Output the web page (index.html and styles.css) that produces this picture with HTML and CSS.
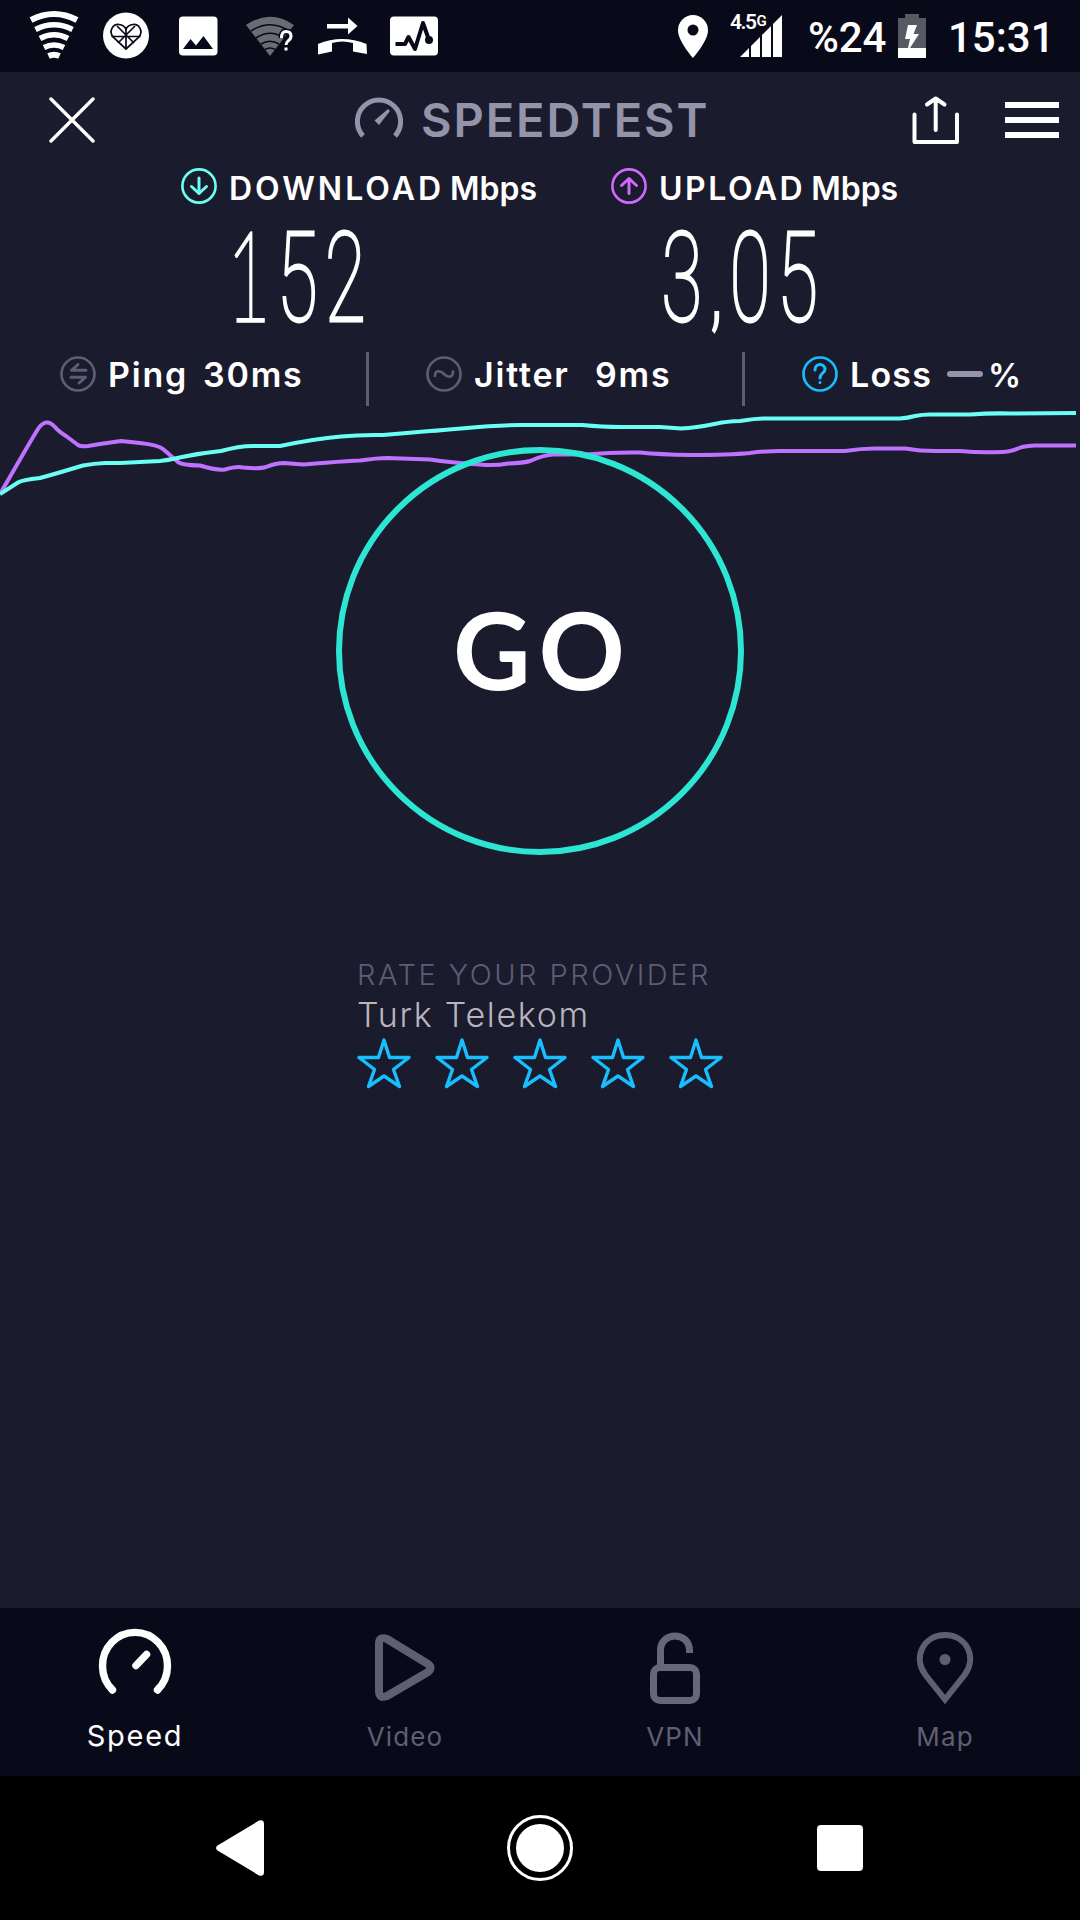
FILE: index.html
```html
<!DOCTYPE html>
<html lang="en">
<head>
<meta charset="utf-8">
<title>Speedtest</title>
<link rel="stylesheet" href="styles.css">
</head>
<body>
<div class="screen">
  <div class="statusbar">
    <svg class="status-icons" width="420" height="72" viewBox="24 0 420 72">
      <g fill="none" stroke="#fff">
        <path d="M31 20Q54 8 77 20" stroke-width="6"/>
        <path d="M35.5 29.500Q54 20 72.500 29.500" stroke-width="5.500"/>
        <path d="M40 38.500Q54 31 68 38.500" stroke-width="5.500"/>
        <path d="M44 47.500Q54 42.500 64 47.500" stroke-width="5.500"/>
        <path d="M48.500 56Q54 53.500 59.500 56" stroke-width="6"/>
      </g>
      <circle cx="126" cy="35.500" r="23" fill="#fff"/>
      <g fill="none" stroke="#090a19" stroke-width="1.700">
        <path d="M126 49L113.500 37.500C108 31 113 24 119 24.500Q124 25 126 29Q128 25 133 24.500C139 24 144 31 138.500 37.500Z"/>
        <path d="M126 27V49M111.500 36.500H140.500M117 26L134 43M135 26L118 43"/>
      </g>
      <rect x="179" y="16.500" width="38.500" height="39" rx="4" fill="#fff"/>
      <path d="M183 49L190.500 39L196 45.500L203.500 36L213 49Z" fill="#090a19"/>
      <path d="M246 25Q270 8.500 294 25L270 56Z" fill="#6b6b75"/>
      <path d="M251 31Q270 18.500 289 31M256 38Q270 28.500 284 38M261 44Q270 38.500 279 44M265 49.500Q270 46.500 275 49.500" fill="none" stroke="#090a19" stroke-width="1.600"/>
      <path d="M281.500 38Q281.500 31.500 286 31.500Q291 31.500 291 36Q291 39 288 41Q286 43 286 45M286 48V50" fill="none" stroke="#090a19" stroke-width="6"/>
      <path d="M281.500 38Q281.500 31.500 286 31.500Q291 31.500 291 36Q291 39 288 41Q286 43 286 45M286 47.500V50.500" fill="none" stroke="#fff" stroke-width="3"/>
      <path d="M327 24H348V17.500L357.500 26L348 34.500V28.500H327Z" fill="#fff"/>
      <path d="M318 44Q342 34 366.500 44L367 54L353 51.500V43Q342 40 332 43V51.500L318 54.500Z" fill="#fff"/>
      <rect x="390" y="16.500" width="48" height="39" rx="4" fill="#fff"/>
      <path d="M395.500 44H405L408.500 37L415 49L423 23L429 40" fill="none" stroke="#090a19" stroke-width="4" stroke-linejoin="round"/>
      <circle cx="429" cy="40" r="4" fill="#090a19"/>
    </svg>
    <div class="status-right">
      <svg width="32" height="44" viewBox="0 0 32 44"><path fill="#fff" fill-rule="evenodd" d="M16 1A15 15.500 0 0 0 1 16.500C1 27 16 44 16 44S31 27 31 16.500A15 15.500 0 0 0 16 1ZM16 10.500A5.500 5.500 0 1 1 16 21.500A5.500 5.500 0 1 1 16 10.500Z"/></svg>
      <div class="signal">
        <span class="net">4.5<small>G</small></span>
        <svg width="42" height="44" viewBox="0 0 42 44" fill="#fff"><path d="M0 43L9 34V43ZM11 32L20 23V43H11ZM22 21L31 12V43H22ZM33 10L42 1V43H33Z"/></svg>
      </div>
      <span class="percent">%24</span>
      <svg class="battery" width="28" height="44" viewBox="0 0 28 44"><path fill="#595963" d="M7 0H21V4H28V34H0V4H7Z"/><path fill="#fff" d="M0 34H10L12 25H7L10 11H19L15.500 20H21L12 34H28V44H0Z"/></svg>
      <span class="clock">15:31</span>
    </div>
  </div>

  <div class="header">
    <svg width="46" height="46" viewBox="0 0 46 46"><path d="M2 2L44 44M44 2L2 44" stroke="#fff" stroke-width="3.400" stroke-linecap="round"/></svg>
    <div class="brand">
      <svg width="48" height="42" viewBox="0 0 48 42"><path d="M8 40A21.600 21.600 0 1 1 40 40" fill="none" stroke="#9393a9" stroke-width="5"/><path d="M19.500 24.500L33 13L35 15L24 29Z" fill="#9393a9"/></svg>
      <span class="brand-name">SPEEDTEST</span>
    </div>
    <div class="actions">
      <svg width="48" height="48" viewBox="0 0 48 48" fill="none" stroke="#fff" stroke-width="4" stroke-linecap="round"><path d="M2.500 18.500V46H45V18.500M23.700 34V3M15 8.500L23.700 2.500L32.500 8.500" stroke-linejoin="round"/></svg>
      <svg width="54" height="36" viewBox="0 0 54 36" fill="#fff"><path d="M0 0H54V6H0ZM0 15H54V21H0ZM0 30H54V36H0Z"/></svg>
    </div>
  </div>

  <div class="results">
    <div class="result down">
      <div class="result-label">
        <svg width="36" height="36" viewBox="0 0 36 36" fill="none" stroke="#6afff3" stroke-linecap="round" stroke-linejoin="round"><circle cx="18" cy="18" r="16.600" stroke-width="2.600"/><path d="M18 10V25.500M10.500 18.500L18 25.500L25.500 18.500" stroke-width="3"/></svg>
        <span><span class="caps">DOWNLOAD</span> Mbps</span>
      </div>
      <svg class="figure" width="150" height="108" viewBox="0 0 150 108"><g transform="scale(.6 1)"><text x="-10 73 153" y="98"><tspan class="one">1</tspan>52</text></g></svg>
    </div>
    <div class="result up">
      <div class="result-label">
        <svg width="36" height="36" viewBox="0 0 36 36" fill="none" stroke="#d168ff" stroke-linecap="round" stroke-linejoin="round"><circle cx="18" cy="18" r="16.600" stroke-width="2.600"/><path d="M18 25.500V10.500M10.500 17.500L18 10.500L25.500 17.500" stroke-width="3"/></svg>
        <span><span class="caps">UPLOAD</span> Mbps</span>
      </div>
      <svg class="figure" width="180" height="108" viewBox="0 0 180 108"><g transform="scale(.6 1)"><text x="-3 80 111 190" y="98">3<tspan class="comma">,</tspan>05</text></g></svg>
    </div>
  </div>

  <div class="metrics">
    <div class="metric ping">
      <svg width="36" height="36" viewBox="0 0 36 36" fill="none" stroke="#5d5d73" stroke-linecap="round" stroke-linejoin="round"><circle cx="18" cy="18" r="16.500" stroke-width="2.600"/><path d="M26 14.300H11.500L18 8.500M11 21.200H25.500L19 27" stroke-width="3"/></svg>
      <span class="name">Ping</span><span class="value">30ms</span>
    </div>
    <div class="metric jitter">
      <svg width="36" height="36" viewBox="0 0 36 36" fill="none" stroke="#5d5d73" stroke-linecap="round"><circle cx="18" cy="18" r="16.500" stroke-width="2.600"/><path d="M9 20C9 14 14 14 18 18S27 22 27 15.500" stroke-width="2.600"/></svg>
      <span class="name">Jitter</span><span class="value">9ms</span>
    </div>
    <div class="metric loss">
      <svg width="36" height="36" viewBox="0 0 36 36" fill="none" stroke="#18bfff" stroke-linecap="round"><circle cx="18" cy="18" r="16.500" stroke-width="2.600"/><path d="M13 14C13 6.500 23 7 23 13.500C23 17 18 17 18 22M18 26.500V26.600" stroke-width="3"/></svg>
      <span class="name">Loss</span><span class="dash"></span><span class="unit">%</span>
    </div>
  </div>

  <svg class="chart" width="1080" height="94" viewBox="0 406 1080 94" fill="none" stroke-width="4" stroke-linejoin="round">
    <path stroke="#bf71ff" d="M0 494C12 474 25 450 38 429Q46 417 55 427Q58 431 66 436L78 445Q81 447 88 446L100 444L121 441L140 443Q158 445 163 449L178 462Q181 465 200 465.500Q216 470.500 225 469.500Q237 466 243 467.500Q260 469 266 467Q276 463 284 463L303 464.500C325 463 343 461 360 460.500Q378 458 387 458L430 459.500Q450 462.500 480 464.500Q495 466 508 463.500Q524 463 530 461Q546 454 555 454.500L586 454.500Q613 452 640 452.500Q660 454.500 690 455Q730 455 750 453Q770 450.500 785 451H845Q861 448.500 875 448.500H905Q923 451.500 940 451H960Q980 453 1002 452Q1010 452 1022 447Q1030 445 1038 445.500H1076"/>
    <path stroke="#6afff3" d="M0 494L18 482.500Q22 480 40 478Q55 474 83 465.500Q94 463.500 105 463H120L160 461Q170 460 182 457Q201 453 221 451Q240 445.500 256 446Q270 446 280 446C304 441 324 438 341 436.500Q360 434.500 383 435L430 431C465 428.500 490 425 520 425H582Q603 427 620 427H660L681 428.500Q695 428 717 423.500Q726 421.500 740 421Q755 418.500 764 418.500H900Q908 418 915 416Q922 414.500 930 414.500H970Q990 413 1010 413.500L1076 413"/>
  </svg>

  <div class="go-button"><span>GO</span></div>

  <div class="rate">
    <div class="rate-title">RATE YOUR PROVIDER</div>
    <div class="provider">Turk Telekom</div>
    <div class="stars">
      <svg width="54" height="52" viewBox="0 0 54 52"><path d="M27 2L32.500 19.500H52L36.500 31.500L42.500 48.500L27 38L11.500 48.500L17.500 31.500L2 19.500H21.500Z"/></svg>
      <svg width="54" height="52" viewBox="0 0 54 52"><path d="M27 2L32.500 19.500H52L36.500 31.500L42.500 48.500L27 38L11.500 48.500L17.500 31.500L2 19.500H21.500Z"/></svg>
      <svg width="54" height="52" viewBox="0 0 54 52"><path d="M27 2L32.500 19.500H52L36.500 31.500L42.500 48.500L27 38L11.500 48.500L17.500 31.500L2 19.500H21.500Z"/></svg>
      <svg width="54" height="52" viewBox="0 0 54 52"><path d="M27 2L32.500 19.500H52L36.500 31.500L42.500 48.500L27 38L11.500 48.500L17.500 31.500L2 19.500H21.500Z"/></svg>
      <svg width="54" height="52" viewBox="0 0 54 52"><path d="M27 2L32.500 19.500H52L36.500 31.500L42.500 48.500L27 38L11.500 48.500L17.500 31.500L2 19.500H21.500Z"/></svg>
    </div>
  </div>

  <div class="tabs">
    <div class="tab active">
      <svg width="80" height="84" viewBox="0 0 80 84" fill="none" stroke="#fff" stroke-width="7.400" stroke-linecap="round"><path d="M17.500 66A32.500 33.500 0 1 1 62.500 66M41 41.500L51.500 30.500"/></svg>
      <span>Speed</span>
    </div>
    <div class="tab">
      <svg width="80" height="84" viewBox="0 0 80 84" fill="none" stroke="#5f5f74" stroke-width="8" stroke-linejoin="round"><path d="M14 20Q14 12 22 15L63 40Q68 43.500 63 48L22 72Q14 75 14 67Z"/></svg>
      <span>Video</span>
    </div>
    <div class="tab">
      <svg width="80" height="84" viewBox="0 0 80 84" fill="none" stroke="#676779" stroke-width="7"><path d="M25.500 42V26.500C25.500 7 54.500 7 54.500 26.500V29"/><rect x="18.500" y="43.500" width="43" height="33" rx="6.500"/></svg>
      <span>VPN</span>
    </div>
    <div class="tab">
      <svg width="80" height="84" viewBox="0 0 80 84" fill="none" stroke="#5f5f74" stroke-width="6"><path d="M40 75.500L20.500 51C7 33 19 11 40 11S73 33 59.500 51Z"/><circle cx="40" cy="35.500" r="5.500" fill="#5f5f74" stroke="none"/></svg>
      <span>Map</span>
    </div>
  </div>

  <div class="navbar">
    <svg width="48" height="56" viewBox="0 0 48 56"><path fill="#fff" d="M1.500 25.500L43 .6Q48-1 48 4V52Q48 57 43 55.400L1.500 30.500Q-1.500 28 1.500 25.500Z"/></svg>
    <svg width="66" height="66" viewBox="0 0 66 66"><circle cx="33" cy="33" r="31.500" fill="none" stroke="#fff" stroke-width="3"/><circle cx="33" cy="33" r="24" fill="#fff"/></svg>
    <svg width="46" height="46" viewBox="0 0 46 46"><rect width="46" height="46" rx="4" fill="#fff"/></svg>
  </div>
</div>
</body>
</html>
```
FILE: styles.css
```css
* { box-sizing: border-box; }
body { margin: 0; background: #1b1b2e; color: #fff; font-family: Inter, "Liberation Sans", sans-serif; }
svg { display: block; flex: none; }
span, .rate-title, .provider { white-space: nowrap; line-height: 1; }

.screen { width: 1080px; height: 1920px; display: flex; flex-direction: column; background: #1b1b2e; overflow: hidden; }

.statusbar { height: 72px; flex: none; background: #090a19; display: flex; justify-content: space-between; padding: 0 30px 0 24px; font-family: Roboto, sans-serif; }
.status-right { display: flex; align-items: flex-start; padding-top: 14px; }
.signal { display: flex; margin-left: 21px; align-items: flex-start; width: 53px; }
.net { width: 10px; font-size: 21px; font-weight: 600; line-height: 14px; letter-spacing: -1.5px; }
.net small { font-size: 15px; margin-left: 1px; vertical-align: 3px; line-height: 1; }
.percent { margin-left: 25px; width: 78px; font-size: 42px; font-weight: 500; line-height: 47px; letter-spacing: -.2px; }
.battery { margin-left: 12px; }
.clock { margin-left: 22px; width: 102px; font-size: 42px; font-weight: 500; line-height: 47px; }

.header { height: 96px; flex: none; display: grid; grid-template-columns: 300px 1fr 300px; align-items: center; padding: 0 21px 0 49px; }
.brand { display: flex; align-items: center; gap: 18px; margin-left: 6px; }
.brand > svg { margin-top: -6px; }
.brand-name { font-size: 47px; font-weight: 600; color: #9393a9; letter-spacing: 1.9px; padding-bottom: 2px; }
.actions { display: flex; align-items: center; justify-content: flex-end; gap: 45px; }

.results { height: 176px; flex: none; display: flex; padding: 0 0 0 181px; }
.result { width: 430px; }
.result-label { display: flex; align-items: center; gap: 12px; height: 36px; font-size: 32px; font-weight: 600; }
.result-label > span { padding-top: 5px; word-spacing: -2px; }
.caps { letter-spacing: 2.5px; }
.down .caps { letter-spacing: 3px; }
.figure { margin: 19px 0 0 52px; overflow: visible; }
.figure text { font-family: Roboto, sans-serif; font-weight: 100; font-size: 125px; fill: #fff; stroke: #fff; stroke-width: 2.8px; }
.figure .one { font-family: Lato, sans-serif; stroke-width: 3.6px; }
.figure .comma { font-size: 90px; font-weight: 400; stroke: none; }

.metrics { height: 62px; flex: none; display: grid; grid-template-columns: 369px 376px 1fr; padding-top: 8px; }
.metric { height: 54px; display: flex; align-items: center; padding-bottom: 10px; font-size: 34px; font-weight: 600; letter-spacing: 1.8px; }
.metric span { position: relative; top: 1px; }
.ping, .jitter { border-right: 3px solid #5d5d73; }
.ping { padding-left: 60px; }
.jitter { padding-left: 57px; }
.loss { padding-left: 57px; letter-spacing: 1.2px; }
.name { margin-left: 12px; }
.ping .name { width: 95px; }
.jitter .name { width: 121px; }
.loss .name { width: 97px; }
.metric .dash { top: 0; width: 36px; height: 6px; border-radius: 3px; background: #9393a9; }
.unit { margin-left: 5px; font-size: 33px; }

.chart { height: 94px; }
.go-button { width: 408px; height: 408px; flex: none; margin: -53px auto 0; border: 6px solid #2ce6d3; border-radius: 50%; display: flex; align-items: center; justify-content: center; padding-bottom: 5px; font-family: Lato, sans-serif; font-size: 107px; font-weight: 700; letter-spacing: 8px; }
.go-button span { margin-right: -6px; }

.rate { margin: 105px 0 0 357px; width: 400px; font-weight: 300; }
.rate-title { font-size: 29px; color: #5d5d73; height: 38px; letter-spacing: 2.5px; }
.provider { font-size: 34px; color: #b9b5be; height: 40px; letter-spacing: 1.7px; }
.stars { display: flex; gap: 24px; }
.stars path { fill: none; stroke: #18bfff; stroke-width: 3.4px; stroke-linejoin: round; }

.tabs { margin-top: auto; height: 168px; flex: none; background: #090a19; display: grid; grid-template-columns: repeat(4, 1fr); }
.tab { display: flex; flex-direction: column; align-items: center; padding-top: 16px; color: #5f5f74; font-size: 26px; letter-spacing: 1.1px; }
.tab span { height: 40px; line-height: 40px; margin-top: 9px; }
.tab.active { color: #fff; font-size: 29px; letter-spacing: 1.7px; }
.tab.active span { margin-top: 8px; }

.navbar { height: 144px; flex: none; background: #000; display: flex; justify-content: space-between; align-items: center; padding: 0 217px 0 216px; }
.navbar svg:nth-child(2) { margin-left: -2px; }
```
